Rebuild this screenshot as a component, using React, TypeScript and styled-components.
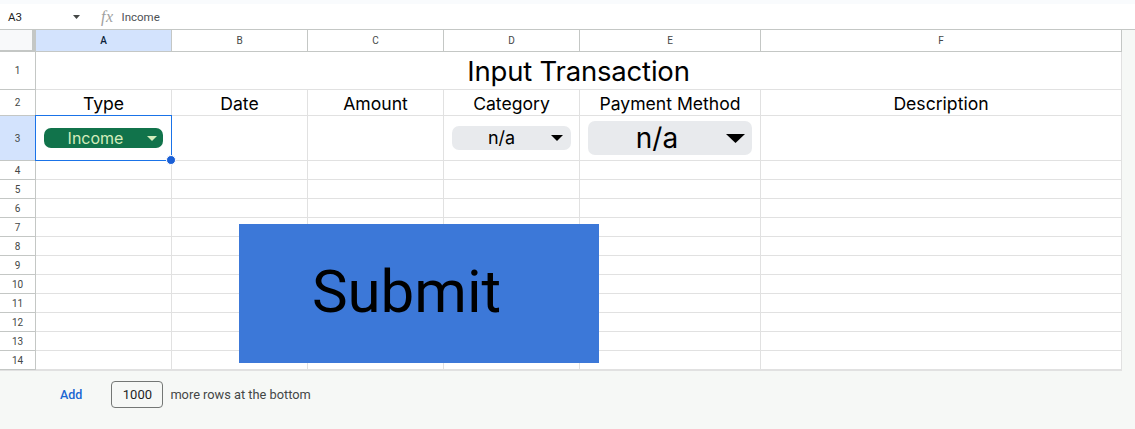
import React from "react";
import styled, { createGlobalStyle } from "styled-components";

const GlobalStyle = createGlobalStyle`
  html, body { margin: 0; padding: 0; background: #ffffff; }
  body { font-family: Roboto, "Liberation Sans", Arial, sans-serif; }
  * { box-sizing: border-box; }
`;

const CELL_FONT = `Inter, "Noto Sans", "Liberation Sans", sans-serif`;
const GRID_LINE = "#e1e1e1";
const HEAD_LINE = "#c4c7c5";

const Page = styled.div`
  width: 1135px;
  height: 429px;
  display: flex;
  flex-direction: column;
  background: #f6f8f6;
  overflow: hidden;
`;

const TopStrip = styled.div`
  height: 4px;
  background: #f9fbfd;
`;

const FormulaBar = styled.div`
  height: 26px;
  background: #ffffff;
  border-bottom: 1px solid ${HEAD_LINE};
  display: flex;
  align-items: center;
  font-size: 11.5px;
  color: #1f1f1f;
`;

const NameBox = styled.div`
  width: 88px;
  padding-left: 8px;
  padding-right: 8px;
  display: flex;
  align-items: center;
  justify-content: space-between;
`;

const Fx = styled.span`
  font-family: "Liberation Serif", "DejaVu Serif", serif;
  font-style: italic;
  font-size: 16px;
  color: #a0a0a0;
  margin-left: 13px;
  margin-right: 8px;
  letter-spacing: 0.5px;
`;

const FormulaText = styled.span`
  color: #4d5156;
`;

const SheetRow = styled.div`
  display: flex;
  background: #f6f8f6;
`;

const SheetWrap = styled.div`
  position: relative;
`;

const Grid = styled.div`
  display: grid;
  grid-template-columns: 36px 136px 136px 136px 136px 181px 361px;
  grid-template-rows: 22px 38px 26px 45px repeat(11, 19px);
  background: #ffffff;
  border-bottom: 1px solid ${GRID_LINE};
`;

const Corner = styled.div`
  background: #f8f9fa;
  border-right: 4px solid #c4c7c5;
  border-bottom: 2px solid #c4c7c5;
`;

const ColHead = styled.div<{ $selected?: boolean }>`
  display: flex;
  align-items: center;
  justify-content: center;
  font-size: 10px;
  color: ${(p) => (p.$selected ? "#0b1f3a" : "#444746")};
  font-weight: ${(p) => (p.$selected ? 500 : 400)};
  background: ${(p) => (p.$selected ? "#d3e3fd" : "#ffffff")};
  border-right: 1px solid ${HEAD_LINE};
  border-bottom: 1px solid ${HEAD_LINE};
`;

const RowHead = styled.div<{ $selected?: boolean }>`
  display: flex;
  align-items: center;
  justify-content: center;
  font-size: 10px;
  color: #444746;
  background: ${(p) => (p.$selected ? "#d3e3fd" : "#ffffff")};
  border-right: 1px solid ${HEAD_LINE};
  border-bottom: 1px solid ${HEAD_LINE};
`;

const Cell = styled.div<{ $span?: number }>`
  position: relative;
  grid-column: span ${(p) => p.$span ?? 1};
  display: flex;
  align-items: flex-end;
  justify-content: center;
  padding: 0 8px 1px;
  border-right: 1px solid ${GRID_LINE};
  border-bottom: 1px solid ${GRID_LINE};
  font-family: ${CELL_FONT};
  color: #000000;
  white-space: nowrap;
`;

const TitleCell = styled(Cell)`
  font-size: 27.5px;
  padding-bottom: 1px;
  letter-spacing: -0.2px;
`;

const HeaderCell = styled(Cell)`
  font-size: 17.6px;
  padding-bottom: 1px;
`;

const ChipCell = styled(Cell)`
  align-items: center;
  padding: 0 8px;
`;

const SelectedCell = styled(ChipCell)`
  &::after {
    content: "";
    position: absolute;
    left: -1px;
    top: -1px;
    right: -1px;
    bottom: -1px;
    border: 1.5px solid #1a73e8;
    pointer-events: none;
  }
  &::before {
    content: "";
    position: absolute;
    right: -5px;
    bottom: -5px;
    width: 8px;
    height: 8px;
    border-radius: 50%;
    background: #1a5fd6;
    border: 1px solid #ffffff;
    z-index: 2;
  }
`;

const Chip = styled.div<{
  $bg: string;
  $fg: string;
  $h: number;
  $size: number;
  $pr: number;
}>`
  width: 100%;
  height: ${(p) => p.$h}px;
  background: ${(p) => p.$bg};
  color: ${(p) => p.$fg};
  border-radius: 7px;
  display: flex;
  align-items: center;
  padding-right: ${(p) => p.$pr}px;
  font-size: ${(p) => p.$size}px;
  font-family: ${CELL_FONT};
`;

const ChipLabel = styled.span`
  flex: 1;
  text-align: center;
  line-height: 1;
`;

const Arrow = ({ w, h, color }: { w: number; h: number; color: string }) => (
  <svg width={w} height={h} viewBox={`0 0 ${w} ${h}`} style={{ display: "block" }}>
    <polygon points={`0,0 ${w},0 ${w / 2},${h}`} fill={color} />
  </svg>
);

const SubmitShape = styled.div`
  position: absolute;
  left: 239px;
  top: 194px;
  width: 360px;
  height: 139px;
  background: #3c78d8;
  display: flex;
  align-items: center;
  justify-content: center;
  font-family: Roboto, "Liberation Sans", sans-serif;
  font-size: 60px;
  color: #000000;
  padding-bottom: 4px;
  padding-right: 25px;
`;

const RightGutter = styled.div`
  flex: 1;
  background: #f6f8f6;
`;

const BottomBar = styled.div`
  flex: 1;
  display: flex;
  align-items: center;
  padding-left: 60px;
  padding-bottom: 12px;
  font-size: 12.8px;
  color: #444746;
`;

const AddLink = styled.span`
  color: #1a67d2;
  font-weight: 500;
  font-size: 12.5px;
  margin-right: 28px;
`;

const RowsInput = styled.div`
  width: 52px;
  height: 27px;
  border: 1px solid #747775;
  border-radius: 4px;
  display: flex;
  align-items: center;
  justify-content: center;
  font-size: 13px;
  color: #1f1f1f;
  margin-left: 1px;
  margin-right: 7px;
  background: #f6f8f6;
`;

const cols = ["A", "B", "C", "D", "E", "F"];
const headers = ["Type", "Date", "Amount", "Category", "Payment Method", "Description"];

export default function App() {
  const emptyRows = Array.from({ length: 11 }, (_, i) => i + 4);
  return (
    <>
      <GlobalStyle />
      <Page>
        <TopStrip />
        <FormulaBar>
          <NameBox>
            <span>A3</span>
            <Arrow w={7} h={4} color="#444746" />
          </NameBox>
          <Fx>fx</Fx>
          <FormulaText>Income</FormulaText>
        </FormulaBar>
        <SheetRow>
          <SheetWrap>
            <Grid>
              <Corner />
              {cols.map((c) => (
                <ColHead key={c} $selected={c === "A"}>
                  {c}
                </ColHead>
              ))}

              <RowHead>1</RowHead>
              <TitleCell $span={6}>Input Transaction</TitleCell>

              <RowHead>2</RowHead>
              {headers.map((h) => (
                <HeaderCell key={h}>{h}</HeaderCell>
              ))}

              <RowHead $selected>3</RowHead>
              <SelectedCell>
                <Chip $bg="#11734b" $fg="#d4edbc" $h={20} $size={16} $pr={6}>
                  <ChipLabel>Income</ChipLabel>
                  <Arrow w={10} h={5} color="#d4edbc" />
                </Chip>
              </SelectedCell>
              <ChipCell />
              <ChipCell />
              <ChipCell>
                <Chip $bg="#e8eaed" $fg="#000000" $h={24} $size={18} $pr={8}>
                  <ChipLabel>n/a</ChipLabel>
                  <Arrow w={12} h={6} color="#000000" />
                </Chip>
              </ChipCell>
              <ChipCell>
                <Chip $bg="#e8eaed" $fg="#000000" $h={34} $size={28} $pr={7}>
                  <ChipLabel>n/a</ChipLabel>
                  <Arrow w={19} h={9} color="#000000" />
                </Chip>
              </ChipCell>
              <ChipCell />

              {emptyRows.map((r) => (
                <React.Fragment key={r}>
                  <RowHead>{r}</RowHead>
                  {cols.map((c) => (
                    <Cell key={c} />
                  ))}
                </React.Fragment>
              ))}
            </Grid>
            <SubmitShape>Submit</SubmitShape>
          </SheetWrap>
          <RightGutter />
        </SheetRow>
        <BottomBar>
          <AddLink>Add</AddLink>
          <RowsInput>1000</RowsInput>
          <span>more rows at the bottom</span>
        </BottomBar>
      </Page>
    </>
  );
}
